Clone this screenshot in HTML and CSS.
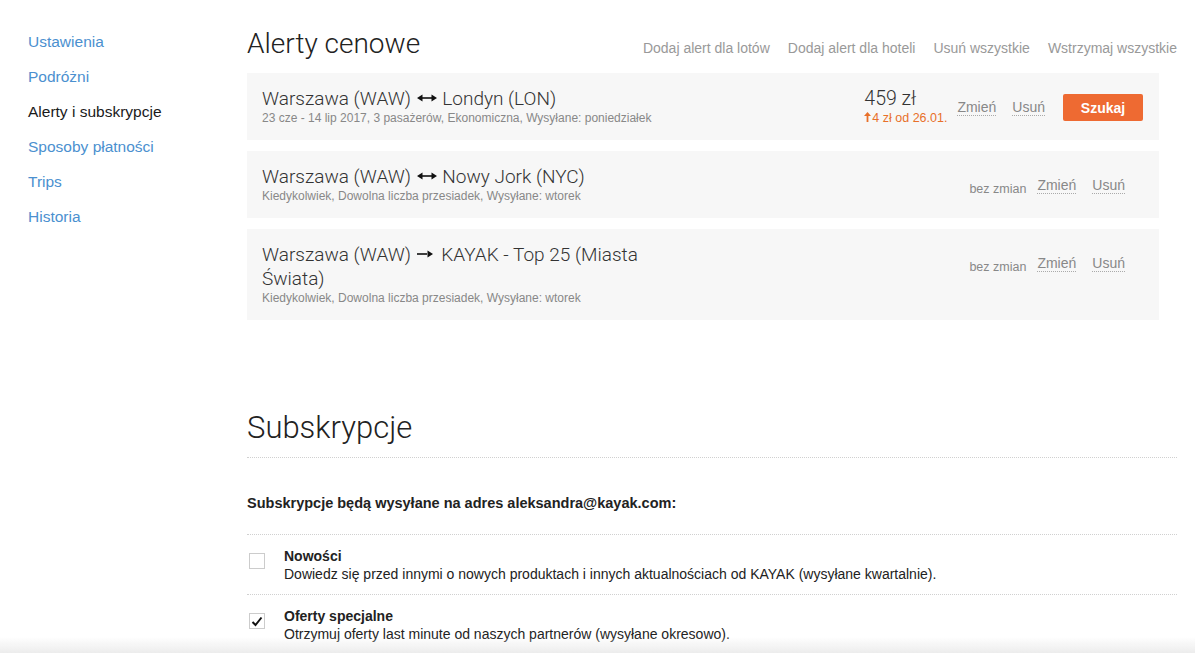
FILE: index.html
```html
<!DOCTYPE html>
<html>
  <head>
    <title>Alerty i subskrypcje</title>
    <link rel="stylesheet" href="styles.css">
  </head>
  <body>

    <div class="page">
      <nav class="side-nav">
        <a href="#">Ustawienia</a>
        <a href="#">Podróżni</a>
        <a href="#" class="active">Alerty i subskrypcje</a>
        <a href="#">Sposoby płatności</a>
        <a href="#">Trips</a>
        <a href="#">Historia</a>
      </nav>

      <main class="content">
        <header class="section-head">
          <h1>Alerty cenowe</h1>
          <div class="head-links">
            <a href="#">Dodaj alert dla lotów</a>
            <a href="#">Dodaj alert dla hoteli</a>
            <a href="#">Usuń wszystkie</a>
            <a href="#">Wstrzymaj wszystkie</a>
          </div>
        </header>

        <div class="alert">
          <div class="alert-info">
            <div class="alert-title">Warszawa (WAW) <svg class="arrow" width="20" height="8" viewBox="0 0 20 8"><path d="M5 4h10" stroke="#111" stroke-width="1.6"/><path d="M0 4l5.5-3.6v7.2z M20 4l-5.5-3.6v7.2z" fill="#111"/></svg> Londyn (LON)</div>
            <div class="alert-sub">23 cze - 14 lip 2017, 3 pasażerów, Ekonomiczna, Wysyłane: poniedziałek</div>
          </div>
          <div class="price">
            <div class="price-value">459 zł</div>
            <div class="price-change"><svg width="7" height="10" viewBox="0 0 7 10"><path d="M3.5 0L7 4H4.4v6H2.6V4H0z" fill="#e8702a"/></svg>4 zł od 26.01.</div>
          </div>
          <a href="#" class="action">Zmień</a>
          <a href="#" class="action">Usuń</a>
          <button class="search-btn">Szukaj</button>
        </div>

        <div class="alert no-search">
          <div class="alert-info">
            <div class="alert-title">Warszawa (WAW) <svg class="arrow" width="20" height="8" viewBox="0 0 20 8"><path d="M5 4h10" stroke="#111" stroke-width="1.6"/><path d="M0 4l5.5-3.6v7.2z M20 4l-5.5-3.6v7.2z" fill="#111"/></svg> Nowy Jork (NYC)</div>
            <div class="alert-sub">Kiedykolwiek, Dowolna liczba przesiadek, Wysyłane: wtorek</div>
          </div>
          <span class="status">bez zmian</span>
          <a href="#" class="action">Zmień</a>
          <a href="#" class="action">Usuń</a>
        </div>

        <div class="alert no-search">
          <div class="alert-info">
            <div class="alert-title narrow">Warszawa (WAW) <svg class="arrow single" width="16" height="8" viewBox="0 0 16 8"><path d="M0 4h10" stroke="#111" stroke-width="1.6"/><path d="M16 4l-5.5-3.6v7.2z" fill="#111"/></svg> KAYAK - Top 25 (Miasta Świata)</div>
            <div class="alert-sub">Kiedykolwiek, Dowolna liczba przesiadek, Wysyłane: wtorek</div>
          </div>
          <span class="status">bez zmian</span>
          <a href="#" class="action">Zmień</a>
          <a href="#" class="action">Usuń</a>
        </div>

        <section class="subs">
          <h2>Subskrypcje</h2>
          <p class="subs-email">Subskrypcje będą wysyłane na adres aleksandra@kayak.com:</p>

          <label class="sub-item">
            <span class="check"></span>
            <span class="sub-text">
              <strong>Nowości</strong>
              <span>Dowiedz się przed innymi o nowych produktach i innych aktualnościach od KAYAK (wysyłane kwartalnie).</span>
            </span>
          </label>

          <label class="sub-item">
            <span class="check"><svg width="12" height="11" viewBox="0 0 12 11"><path d="M1.5 6l3 3L10.5 1.5" fill="none" stroke="#111" stroke-width="2"/></svg></span>
            <span class="sub-text">
              <strong>Oferty specjalne</strong>
              <span>Otrzymuj oferty last minute od naszych partnerów (wysyłane okresowo).</span>
            </span>
          </label>
        </section>
      </main>
    </div>

    <div class="bottom-fade"></div>

  </body>
</html>
```

FILE: styles.css
```css
*,
*:before,
*:after {
  box-sizing: border-box;
}

body {
  margin: 0px;
  background: #fff;
  color: #222;
  font-family: 'Liberation Sans', Arial, sans-serif;
}

a {
  text-decoration: none;
}

.page {
  display: flex;
}

/* Left menu */

.side-nav {
  display: flex;
  flex-direction: column;
  width: 247px;
  flex-shrink: 0;
  padding: 24px 0px 0px 28px;
}
.side-nav a {
  color: #4b90cf;
  font-size: 15.5px;
  line-height: 35px;
}
.side-nav a.active {
  color: #1a1a1a;
}

/* Main column */

.content {
  width: 930px;
  padding-top: 26px;
}

.section-head {
  display: flex;
  align-items: baseline;
  justify-content: space-between;
  margin-bottom: 11px;
}

h1,
h2 {
  margin: 0px;
  font-family: Roboto, sans-serif;
  font-weight: 300;
  color: #222;
}
h1 {
  font-size: 28px;
  line-height: 36px;
}

.head-links {
  display: flex;
  gap: 18px;
}
.head-links a {
  color: #999;
  font-size: 14px;
}

/* Alert cards */

.alert {
  display: flex;
  align-items: flex-start;
  width: 912px;
  background: #f7f7f7;
  padding: 14px 16px 14px 15px;
  margin-bottom: 11px;
}
.alert.no-search {
  padding-right: 34px;
}

.alert-info {
  flex: 1;
}

.alert-title {
  font-family: Roboto, sans-serif;
  font-weight: 300;
  font-size: 19px;
  line-height: 24px;
  color: #333;
}
.alert-title.narrow {
  max-width: 400px;
}
.arrow {
  vertical-align: 3px;
  margin: 0px 1px;
}
.arrow.single {
  margin-right: 4px;
}

.alert-sub {
  font-size: 12px;
  line-height: 15px;
  color: #888;
}

.price {
  margin-right: -6px;
}
.price-value {
  font-family: Roboto, sans-serif;
  font-weight: 300;
  font-size: 19.5px;
  line-height: 24px;
  color: #333;
}
.price-change {
  font-size: 12.5px;
  line-height: 15px;
  color: #e8702a;
}
.price-change svg {
  margin-right: 1px;
}

.action {
  margin: 12px 0px 0px 16px;
  font-size: 14px;
  line-height: 16px;
  color: #888;
  border-bottom: 1px dotted #aaa;
}

.status {
  margin: 17px -5px 0px 0px;
  font-size: 12.5px;
  line-height: 15px;
  color: #888;
}

.search-btn {
  margin: 7px 0px 0px 18px;
  width: 80px;
  height: 27px;
  border: 0px;
  border-radius: 2px;
  background: #ee6a32;
  color: #fff;
  font-family: 'Liberation Sans', Arial, sans-serif;
  font-size: 14px;
  font-weight: bold;
}

/* Subscriptions */

.subs {
  margin-top: 88px;
}
h2 {
  font-size: 31px;
  line-height: 40px;
  padding-bottom: 9px;
  border-bottom: 1px dotted #d0d0d0;
}

.subs-email {
  margin: 0px;
  padding: 36px 0px 22px;
  font-size: 14.5px;
  line-height: 18px;
  font-weight: bold;
  border-bottom: 1px dotted #d0d0d0;
}

.sub-item {
  display: flex;
  align-items: flex-start;
  padding: 12px 0px 11px 2px;
  border-bottom: 1px dotted #d0d0d0;
}
.sub-item:last-child {
  border-bottom: 0px;
}

.check {
  display: flex;
  align-items: center;
  justify-content: center;
  width: 16px;
  height: 16px;
  margin: 6px 19px 0px 0px;
  border: 1px solid #ccc;
  background: #fff;
}

.sub-text {
  display: flex;
  flex-direction: column;
  font-size: 14px;
  line-height: 18px;
  color: #222;
}

.bottom-fade {
  position: fixed;
  left: 0px;
  right: 0px;
  bottom: 0px;
  height: 16px;
  background: linear-gradient(rgba(236, 236, 236, 0), #ececec);
}
```
